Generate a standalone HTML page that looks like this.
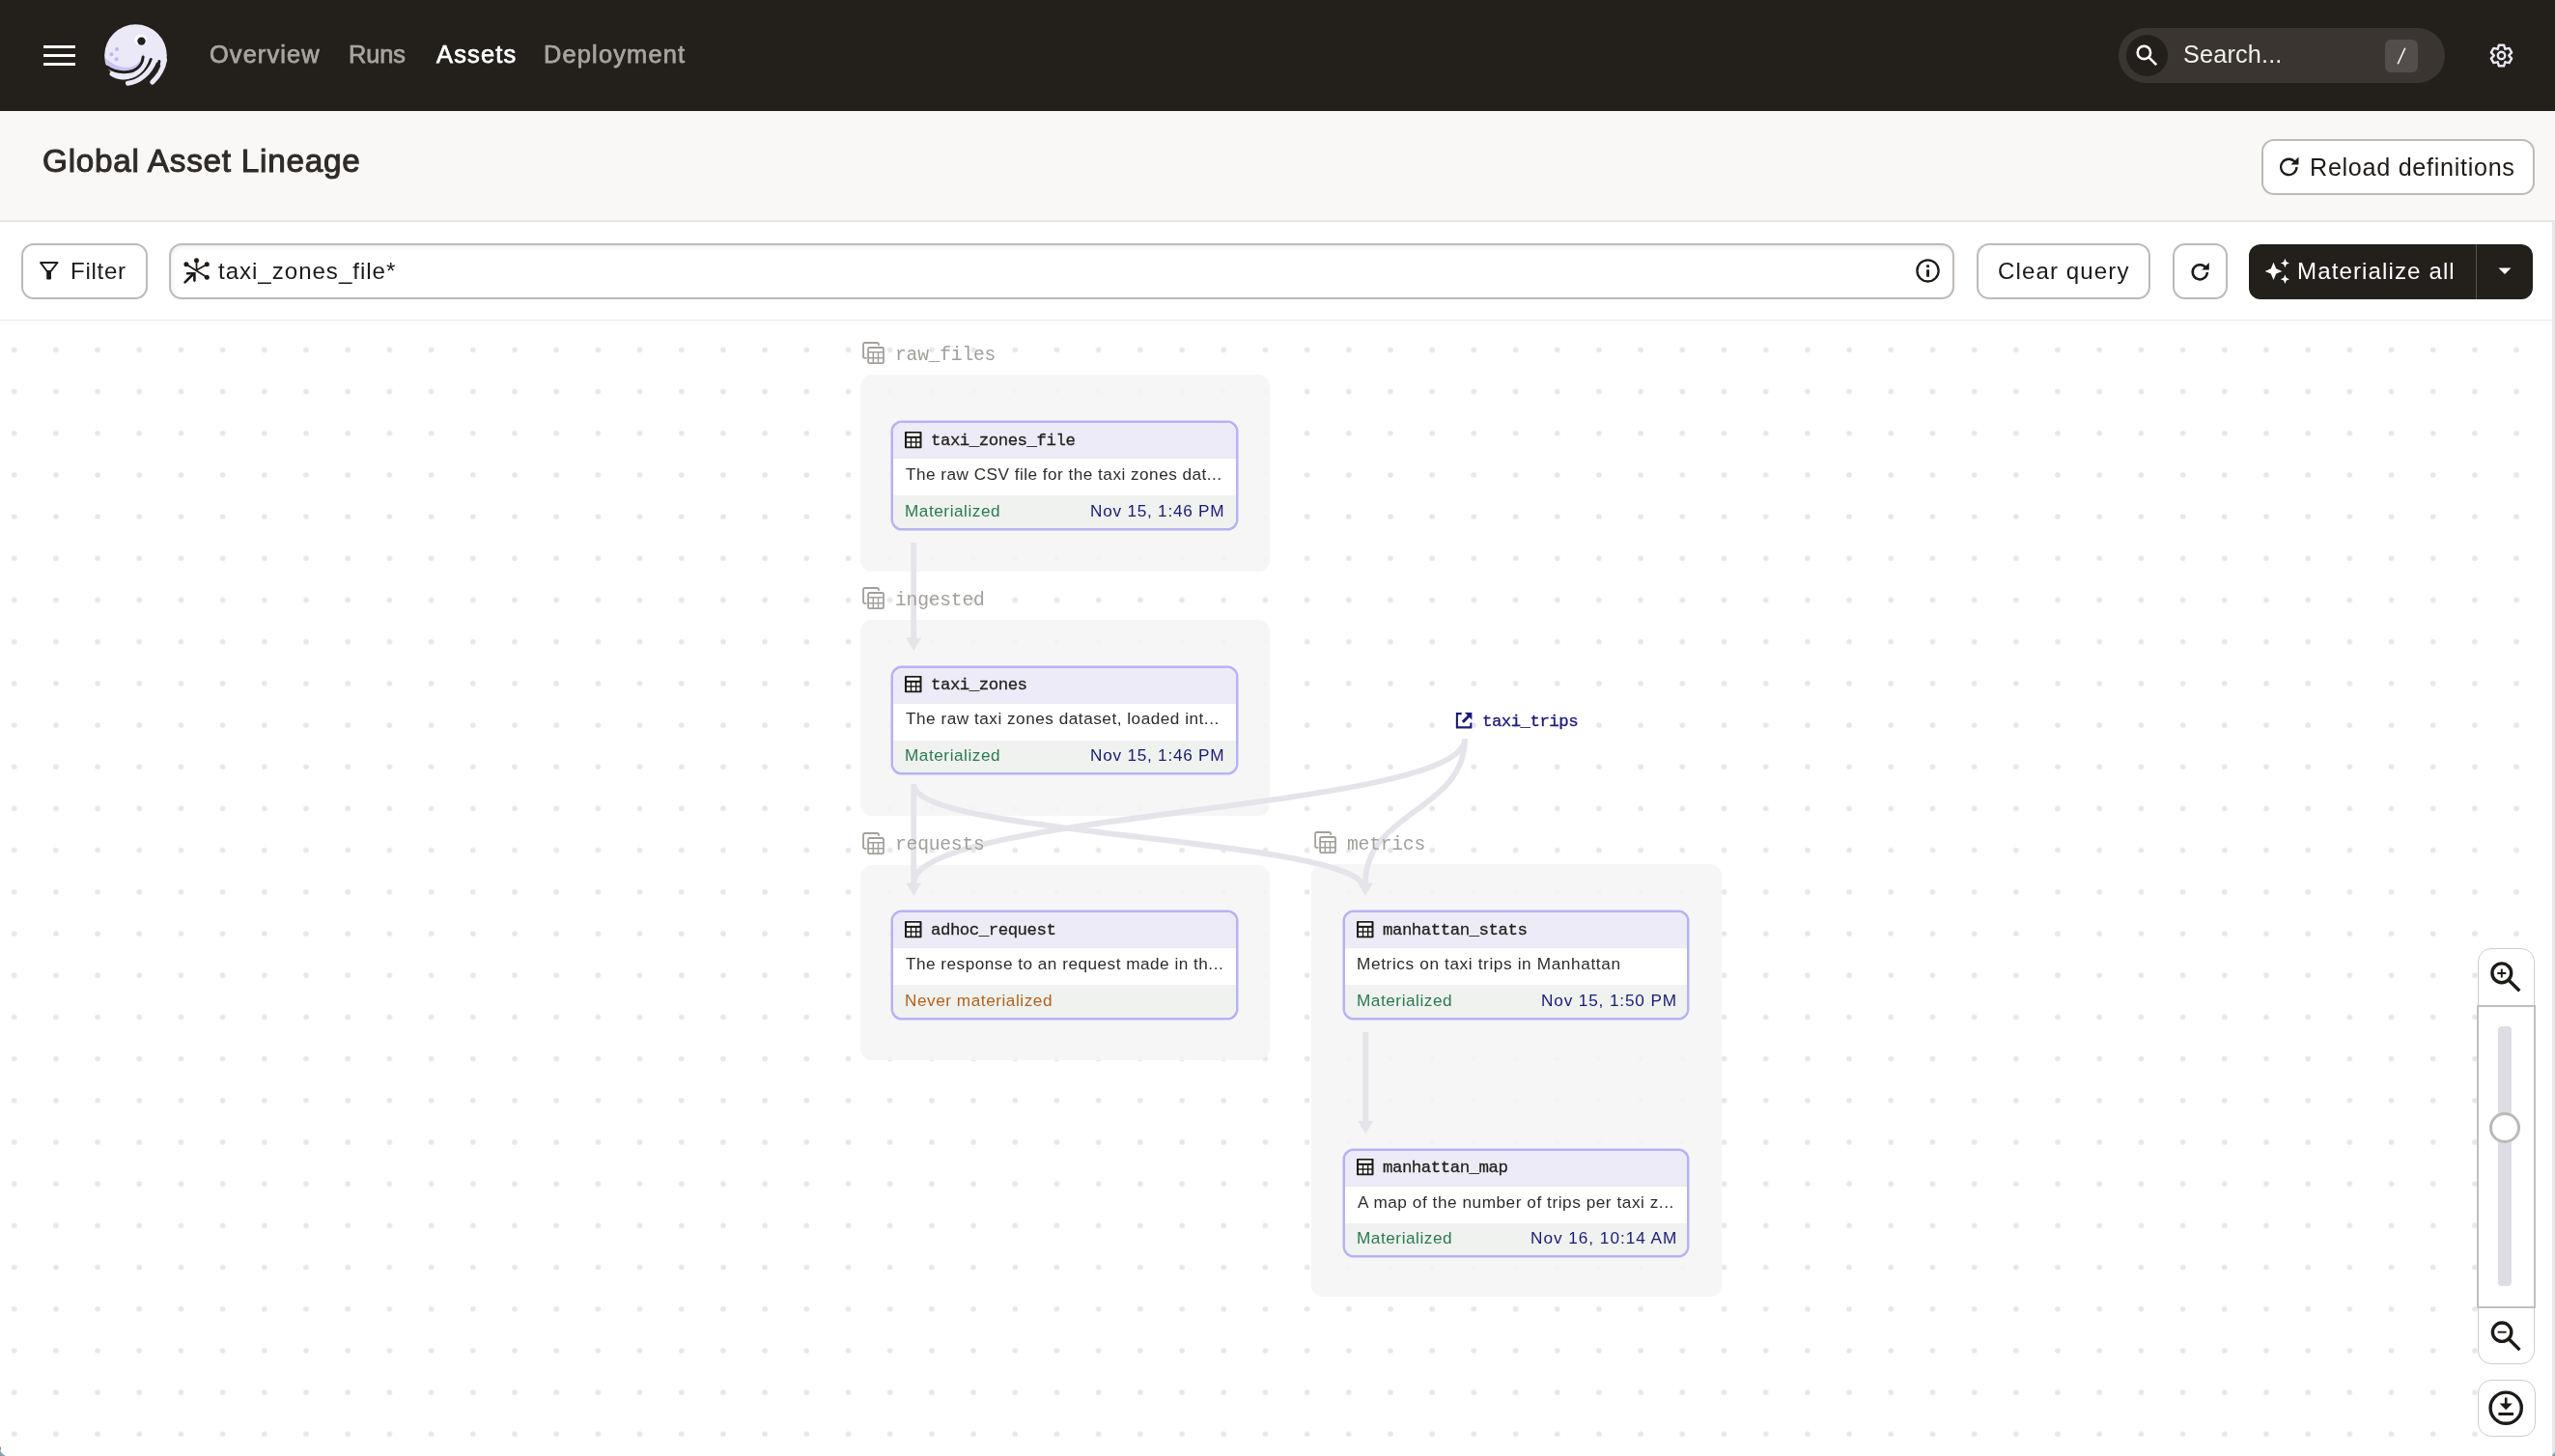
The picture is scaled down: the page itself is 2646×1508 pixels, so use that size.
<!DOCTYPE html>
<html><head><meta charset="utf-8"><title>Global Asset Lineage</title>
<style>
html,body{margin:0;padding:0;width:2646px;height:1508px;overflow:hidden;background:#fff;position:relative;font-family:"Liberation Sans",sans-serif}
.t{position:absolute;white-space:nowrap;will-change:transform}
.btn{position:absolute;box-sizing:border-box;border:2px solid #bdbab7;border-radius:13px;background:#fff}
.inp{box-shadow:inset 1px 2px 4px rgba(0,0,0,0.07)}
.node{position:absolute;width:358.3px;height:112.6px;box-sizing:border-box;border:2.4px solid #b7b2f3;border-radius:11px;overflow:hidden;background:#fff;box-shadow:0 0 0 0.5px #b7b2f3}
.nh{position:absolute;left:0;top:0;right:0;height:36px;background:#ecebf7;border-bottom:1.5px solid #e9ece9}
.nd{position:absolute;left:0;top:37.5px;right:0;height:37.5px;background:#fff}
.ns{position:absolute;left:0;top:75px;right:0;bottom:0;background:#eff2ef}
</style></head><body>
<div style="position:absolute;left:0;top:0;width:2646px;height:115px;background:#231f1b"></div><div style="position:absolute;left:45px;top:46.7px;width:33px;height:3.5px;background:#fff"></div><div style="position:absolute;left:45px;top:55.9px;width:33px;height:3.5px;background:#fff"></div><div style="position:absolute;left:45px;top:64.9px;width:33px;height:3.5px;background:#fff"></div><svg style="position:absolute;left:100px;top:18px" width="80" height="80" viewBox="0 0 80 80">
<defs><mask id="hm"><rect width="80" height="80" fill="#fff"/>
<path d="M0 50 L9 50 C14 57 20 61.5 27 62.5 C36 63.5 44 61.5 50 56.5 C54 52.5 56 49 57.5 45 L62 46 L66 50 L80 50 L80 80 L0 80 Z" fill="#000"/></mask>
<clipPath id="hc"><circle cx="40.5" cy="39.5" r="32.3"/></clipPath></defs>
<g mask="url(#hm)"><circle cx="40.5" cy="39.5" r="32.3" fill="#ebe9f8"/></g>
<path d="M9.5 47 C19 57.5 37 59.5 44.5 50.5 C47 47.5 48 44.5 48.2 41 L49.5 35 C47 43 44 47 40 49.5 C32 54 20 52 8.5 42 Z" fill="#c9c3f6" clip-path="url(#hc)"/>
<path d="M10.5 51 C20 58 37 59.5 44.5 50.5 C47 47.5 48 44.5 48.2 41" stroke="#231f1b" stroke-width="3" fill="none" stroke-linecap="round"/>
<path d="M16.1 58.5 C28 67 51 60 52.8 40" stroke="#ebe9f8" stroke-width="5.1" fill="none" stroke-linecap="round"/>
<path d="M33 65.5 C42 64 52 57.5 56.3 43.5" stroke="#231f1b" stroke-width="3" fill="none" stroke-linecap="round"/>
<path d="M32.5 68.3 C44 67 55 58 60.5 44" stroke="#ebe9f8" stroke-width="5.1" fill="none" stroke-linecap="round"/>
<path d="M55.5 65.5 C60 61 64 54 64.9 45.6" stroke="#231f1b" stroke-width="3" fill="none" stroke-linecap="round"/>
<path d="M57.8 67 C63 62 68.5 56 70.5 44" stroke="#ebe9f8" stroke-width="5.1" fill="none" stroke-linecap="round"/>
<ellipse cx="45.8" cy="23.2" rx="6.3" ry="5.8" fill="#fff"/>
<circle cx="46.5" cy="24.6" r="4.2" fill="#231f1b"/>
<circle cx="21" cy="33" r="2" fill="#bdb6f3"/><circle cx="15.5" cy="38.3" r="2" fill="#bdb6f3"/><circle cx="20.6" cy="43.3" r="2" fill="#bdb6f3"/>
</svg><div class="t" style="left:217.00px;top:44.49px;font-size:25.4px;line-height:25.4px;color:#a8a4a0;font-weight:400;font-family:'Liberation Sans', sans-serif;letter-spacing:1.1px;-webkit-text-stroke:0.75px #a8a4a0;">Overview</div>
<div class="t" style="left:361.10px;top:44.49px;font-size:25.4px;line-height:25.4px;color:#a8a4a0;font-weight:400;font-family:'Liberation Sans', sans-serif;letter-spacing:-0.13px;-webkit-text-stroke:0.75px #a8a4a0;">Runs</div>
<div class="t" style="left:452.00px;top:44.49px;font-size:25.4px;line-height:25.4px;color:#ffffff;font-weight:400;font-family:'Liberation Sans', sans-serif;letter-spacing:1.2px;-webkit-text-stroke:0.75px #fff;">Assets</div>
<div class="t" style="left:562.80px;top:44.49px;font-size:25.4px;line-height:25.4px;color:#a8a4a0;font-weight:400;font-family:'Liberation Sans', sans-serif;letter-spacing:1.18px;-webkit-text-stroke:0.75px #a8a4a0;">Deployment</div>
<div style="position:absolute;left:2194px;top:29px;width:338px;height:57px;border-radius:28.5px;background:#3a3531"></div><div style="position:absolute;left:2202px;top:36px;width:43px;height:43px;border-radius:50%;background:#231f1b"></div><svg style="position:absolute;left:2200px;top:35px" width="44" height="44" viewBox="2200 35 44 44">
<circle cx="2220.4" cy="54.4" r="6.7" stroke="#fff" stroke-width="2.6" fill="none"/>
<line x1="2225.6" y1="59.6" x2="2233.2" y2="67.2" stroke="#fff" stroke-width="2.6"/></svg><div class="t" style="left:2260.50px;top:43.86px;font-size:25.2px;line-height:25.2px;color:#f2f0ee;font-weight:400;font-family:'Liberation Sans', sans-serif;letter-spacing:0.19px;">Search...</div>
<div style="position:absolute;left:2470px;top:41px;width:34px;height:34px;border-radius:6px;background:#534e4b"></div><svg style="position:absolute;left:2470px;top:41px" width="34" height="34"><line x1="20.8" y1="8.7" x2="13.2" y2="25.2" stroke="#fff" stroke-width="1.5"/></svg><svg style="position:absolute;left:2570px;top:37px" width="40" height="40" viewBox="2570 37 40 40">
<path d="M2586.90 50.13 L2587.90 46.71 L2593.10 46.71 L2594.10 50.13 L2594.30 50.92 L2595.08 50.70 L2598.55 49.85 L2601.15 54.36 L2598.68 56.93 L2598.10 57.50 L2598.68 58.07 L2601.15 60.64 L2598.55 65.15 L2595.08 64.30 L2594.30 64.08 L2594.10 64.87 L2593.10 68.29 L2587.90 68.29 L2586.90 64.87 L2586.70 64.08 L2585.92 64.30 L2582.45 65.15 L2579.85 60.64 L2582.32 58.07 L2582.90 57.50 L2582.32 56.93 L2579.85 54.36 L2582.45 49.85 L2585.92 50.70 L2586.70 50.92Z" stroke="#e9e7f2" stroke-width="2.4" fill="none" stroke-linejoin="round"/>
<circle cx="2590.5" cy="57.5" r="3.7" stroke="#e9e7f2" stroke-width="2.4" fill="none"/></svg><div style="position:absolute;left:0;top:115px;width:2646px;height:113px;background:#f9f8f6"></div><div style="position:absolute;left:0;top:228px;width:2646px;height:2px;background:#e7e6e4"></div><div class="t" style="left:44.20px;top:149.50px;font-size:33.3px;line-height:33.3px;color:#2f2b28;font-weight:400;font-family:'Liberation Sans', sans-serif;letter-spacing:0.74px;-webkit-text-stroke:1px #2f2b28;">Global Asset Lineage</div>
<div class="btn" style="left:2342.2px;top:144.2px;width:283.3px;height:57.5px"></div><svg style="position:absolute;left:2358px;top:159.6px" width="26" height="24" viewBox="0 0 26 24">
<path d="M19.2 8.5 A8.2 8.2 0 1 0 20.5 13" stroke="#1d1a17" stroke-width="2.3" fill="none"/>
<path d="M22.5 2.5 L22.5 10.5 L14.5 10.5 Z" fill="#1d1a17"/></svg><div class="t" style="left:2392.00px;top:161.06px;font-size:25.2px;line-height:25.2px;color:#1d1a17;font-weight:400;font-family:'Liberation Sans', sans-serif;letter-spacing:0.69px;">Reload definitions</div>
<div style="position:absolute;left:0;top:230px;width:2643px;height:101px;background:#fff"></div><div style="position:absolute;left:0;top:330.5px;width:2643px;height:1.5px;background:#e8e7e5"></div><div style="position:absolute;left:2643px;top:230px;width:3px;height:1278px;background:#e8e8e8"></div><div class="btn" style="left:22px;top:252px;width:130.5px;height:57.5px"></div><svg style="position:absolute;left:38px;top:268px" width="26" height="26" viewBox="38 268 26 26">
<path d="M42 272 L59.5 272 L52.5 281 L48.8 281 Z" stroke="#1d1a17" stroke-width="2" fill="none" stroke-linejoin="round"/>
<rect x="48.2" y="280" width="4.8" height="9.6" rx="1" fill="#1d1a17"/></svg><div class="t" style="left:73.40px;top:269.29px;font-size:24.1px;line-height:24.1px;color:#1d1a17;font-weight:400;font-family:'Liberation Sans', sans-serif;letter-spacing:0.71px;">Filter</div>
<div class="btn inp" style="left:175.2px;top:252px;width:1849px;height:57.5px"></div><svg style="position:absolute;left:186px;top:264px" width="34" height="34" viewBox="186 264 34 34">
<g stroke="#1d1a17" stroke-width="1.8" fill="none">
<line x1="203.6" y1="279.8" x2="203.5" y2="269.8"/><line x1="192.9" y1="273.8" x2="214.3" y2="287.3"/>
<line x1="203.6" y1="279.8" x2="214.3" y2="273.8"/></g>
<g fill="#1d1a17"><circle cx="203.5" cy="269.8" r="2.5"/><circle cx="192.9" cy="273.8" r="2.5"/><circle cx="214.3" cy="273.8" r="2.5"/><circle cx="214.3" cy="287.3" r="2.5"/></g>
<line x1="191.6" y1="292.4" x2="200.2" y2="283.8" stroke="#1d1a17" stroke-width="2.7" stroke-linecap="round"/>
<path d="M194 283.2 L201.4 283.2 L201.4 290.6" stroke="#1d1a17" stroke-width="2.6" fill="none" stroke-linecap="round"/></svg><div class="t" style="left:226.00px;top:269.29px;font-size:24.1px;line-height:24.1px;color:#1d1a17;font-weight:400;font-family:'Liberation Sans', sans-serif;letter-spacing:0.97px;">taxi_zones_file*</div>
<svg style="position:absolute;left:1982px;top:268px" width="28" height="26" viewBox="1982 268 28 26">
<circle cx="1996.5" cy="280.4" r="11.1" stroke="#1d1a17" stroke-width="2.3" fill="none"/>
<rect x="1995.1" y="279.2" width="2.9" height="7.6" rx="0.5" fill="#1d1a17"/><rect x="1995.1" y="274.2" width="2.9" height="2.9" rx="0.6" fill="#1d1a17"/></svg><div class="btn" style="left:2047.3px;top:252px;width:180px;height:57.5px"></div><div class="t" style="left:2069.00px;top:269.29px;font-size:24.1px;line-height:24.1px;color:#1d1a17;font-weight:400;font-family:'Liberation Sans', sans-serif;letter-spacing:1.1px;">Clear query</div>
<div class="btn" style="left:2250.3px;top:252px;width:57.2px;height:57.5px"></div><svg style="position:absolute;left:2266px;top:268px" width="26" height="26" viewBox="0 0 26 24">
<path d="M18.6 8.5 A7.6 7.6 0 1 0 19.9 13" stroke="#1d1a17" stroke-width="2.5" fill="none"/>
<path d="M21.8 3 L21.8 10.6 L14.2 10.6 Z" fill="#1d1a17"/></svg><div style="position:absolute;left:2328.5px;top:252.5px;width:294px;height:57px;border-radius:12px;background:#231f1b"></div><div style="position:absolute;left:2563.7px;top:252.5px;width:1px;height:57px;background:#57524e"></div><svg style="position:absolute;left:2340px;top:264px" width="34" height="34" viewBox="2340 264 34 34">
<path fill="#fff" d="M2354.50 271.70 L2357.20 278.20 L2363.40 280.90 L2357.20 283.60 L2354.50 290.10 L2351.80 283.60 L2345.60 280.90 L2351.80 278.20Z"/>
<path fill="#fff" d="M2366.40 267.80 L2367.75 271.15 L2371.00 272.50 L2367.75 273.85 L2366.40 277.20 L2365.05 273.85 L2361.80 272.50 L2365.05 271.15Z"/>
<path fill="#fff" d="M2366.40 284.50 L2367.75 287.85 L2371.00 289.20 L2367.75 290.55 L2366.40 293.90 L2365.05 290.55 L2361.80 289.20 L2365.05 287.85Z"/>
</svg><div class="t" style="left:2379.30px;top:269.29px;font-size:24.1px;line-height:24.1px;color:#ffffff;font-weight:400;font-family:'Liberation Sans', sans-serif;letter-spacing:1.1px;">Materialize all</div>
<svg style="position:absolute;left:2584px;top:274px" width="20" height="14"><path d="M3.5 3.5 L16.5 3.5 L10 10 Z" fill="#fff"/></svg><svg style="position:absolute;left:0;top:332px" width="2643" height="1176" viewBox="0 332 2643 1176">
<defs><pattern id="dots" x="-6.895" y="340.70500000000004" width="43.19" height="43.19" patternUnits="userSpaceOnUse">
<circle cx="21.595" cy="21.595" r="2.8" fill="#e7e7e7"/></pattern></defs>
<rect x="0" y="332" width="2643" height="1176" fill="url(#dots)"/></svg><div style="position:absolute;left:890.5px;top:388.3px;width:424.5px;height:203.4px;border-radius:12px;background:rgba(245,245,245,0.88)"></div><div style="position:absolute;left:890.5px;top:642.2px;width:424.5px;height:202.4px;border-radius:12px;background:rgba(245,245,245,0.88)"></div><div style="position:absolute;left:890.5px;top:895.5px;width:424.5px;height:202px;border-radius:12px;background:rgba(245,245,245,0.88)"></div><div style="position:absolute;left:1358.3px;top:895px;width:424.5px;height:448.3px;border-radius:12px;background:rgba(245,245,245,0.88)"></div><svg style="position:absolute;left:0;top:332px" width="2643" height="1176" viewBox="0 332 2643 1176"><path d="M946.2 562 C946.2 612.0 946.2 612.0 946.2 662" stroke="#e5e4ea" stroke-width="5.8" fill="none"/><path d="M946.2 816 C946.2 866.0 946.2 866.0 946.2 916" stroke="#e5e4ea" stroke-width="5.8" fill="none"/><path d="M946.2 812 C946.2 867.0 1414 867.0 1414 922" stroke="#e5e4ea" stroke-width="5.8" fill="none"/><path d="M1517 765 C1517 840.0 946.2 840.0 946.2 915" stroke="#e5e4ea" stroke-width="5.8" fill="none"/><path d="M1517 765 C1517 840.0 1414 840.0 1414 915" stroke="#e5e4ea" stroke-width="5.8" fill="none"/><path d="M1414.2 1069 C1414.2 1115.5 1414.2 1115.5 1414.2 1162" stroke="#e5e4ea" stroke-width="5.8" fill="none"/><path d="M938.2 660.5 L954.2 660.5 L946.2 674Z" fill="#e5e4ea"/><path d="M938.2 914.5 L954.2 914.5 L946.2 928Z" fill="#e5e4ea"/><path d="M1406 914.5 L1422 914.5 L1414 928Z" fill="#e5e4ea"/><path d="M1406.2 1161.0 L1422.2 1161.0 L1414.2 1174.5Z" fill="#e5e4ea"/></svg><svg style="position:absolute;left:893.0px;top:354.3px" width="24" height="24" viewBox="0 0 24 24">
<path d="M17 3.2 V2.6 Q17 1 15.4 1 H2.7 Q1.1 1 1.1 2.6 V15.3 Q1.1 16.9 2.7 16.9 H3.8" stroke="#a39f9b" stroke-width="1.8" fill="none" stroke-linecap="round"/>
<rect x="6.1" y="6.0" width="15.9" height="16.2" rx="1.6" stroke="#a39f9b" stroke-width="1.8" fill="none"/>
<path d="M6.1 10.8 H22 M6.1 16.7 H22 M11.3 10.8 V22.2 M16.5 10.8 V22.2" stroke="#a39f9b" stroke-width="1.5"/></svg><div class="t" style="left:927.30px;top:359.11px;font-size:19.7px;line-height:19.7px;color:#a39f9b;font-weight:400;font-family:'Liberation Mono', monospace;letter-spacing:-0.24px;">raw_files</div>
<svg style="position:absolute;left:893.0px;top:608.2px" width="24" height="24" viewBox="0 0 24 24">
<path d="M17 3.2 V2.6 Q17 1 15.4 1 H2.7 Q1.1 1 1.1 2.6 V15.3 Q1.1 16.9 2.7 16.9 H3.8" stroke="#a39f9b" stroke-width="1.8" fill="none" stroke-linecap="round"/>
<rect x="6.1" y="6.0" width="15.9" height="16.2" rx="1.6" stroke="#a39f9b" stroke-width="1.8" fill="none"/>
<path d="M6.1 10.8 H22 M6.1 16.7 H22 M11.3 10.8 V22.2 M16.5 10.8 V22.2" stroke="#a39f9b" stroke-width="1.5"/></svg><div class="t" style="left:927.30px;top:613.01px;font-size:19.7px;line-height:19.7px;color:#a39f9b;font-weight:400;font-family:'Liberation Mono', monospace;letter-spacing:-0.24px;">ingested</div>
<svg style="position:absolute;left:893.0px;top:861.5px" width="24" height="24" viewBox="0 0 24 24">
<path d="M17 3.2 V2.6 Q17 1 15.4 1 H2.7 Q1.1 1 1.1 2.6 V15.3 Q1.1 16.9 2.7 16.9 H3.8" stroke="#a39f9b" stroke-width="1.8" fill="none" stroke-linecap="round"/>
<rect x="6.1" y="6.0" width="15.9" height="16.2" rx="1.6" stroke="#a39f9b" stroke-width="1.8" fill="none"/>
<path d="M6.1 10.8 H22 M6.1 16.7 H22 M11.3 10.8 V22.2 M16.5 10.8 V22.2" stroke="#a39f9b" stroke-width="1.5"/></svg><div class="t" style="left:927.30px;top:866.31px;font-size:19.7px;line-height:19.7px;color:#a39f9b;font-weight:400;font-family:'Liberation Mono', monospace;letter-spacing:-0.24px;">requests</div>
<svg style="position:absolute;left:1360.8px;top:861px" width="24" height="24" viewBox="0 0 24 24">
<path d="M17 3.2 V2.6 Q17 1 15.4 1 H2.7 Q1.1 1 1.1 2.6 V15.3 Q1.1 16.9 2.7 16.9 H3.8" stroke="#a39f9b" stroke-width="1.8" fill="none" stroke-linecap="round"/>
<rect x="6.1" y="6.0" width="15.9" height="16.2" rx="1.6" stroke="#a39f9b" stroke-width="1.8" fill="none"/>
<path d="M6.1 10.8 H22 M6.1 16.7 H22 M11.3 10.8 V22.2 M16.5 10.8 V22.2" stroke="#a39f9b" stroke-width="1.5"/></svg><div class="t" style="left:1395.10px;top:865.81px;font-size:19.7px;line-height:19.7px;color:#a39f9b;font-weight:400;font-family:'Liberation Mono', monospace;letter-spacing:-0.24px;">metrics</div>
<div class="node" style="left:923.3px;top:436.3px">
<div class="nh"></div><div class="nd"></div><div class="ns"></div></div><svg style="position:absolute;left:937.3px;top:447.0px" width="18" height="18" viewBox="0 0 18 18">
<rect x="0" y="0" width="17.5" height="17.2" rx="0.8" fill="#1d1a17"/>
<g fill="#fff"><rect x="2.06" y="1.7" width="13.4" height="3.1"/>
<rect x="2.06" y="6.9" width="3.74" height="3.4"/><rect x="7.2" y="6.9" width="3.8" height="3.4"/><rect x="12.4" y="6.9" width="3.05" height="3.4"/>
<rect x="2.06" y="11.7" width="3.74" height="3.75"/><rect x="7.2" y="11.7" width="3.8" height="3.75"/><rect x="12.4" y="11.7" width="3.05" height="3.75"/></g></svg><div class="t" style="left:963.80px;top:447.97px;font-size:17.4px;line-height:17.4px;color:#231f1b;font-weight:400;font-family:'Liberation Mono', monospace;letter-spacing:-0.48px;-webkit-text-stroke:0.3px #231f1b;">taxi_zones_file</div>
<div class="t" style="left:938.30px;top:483.24px;font-size:17.2px;line-height:17.2px;color:#2f2b28;font-weight:400;font-family:'Liberation Sans', sans-serif;letter-spacing:0.475px;">The raw CSV file for the taxi zones dat...</div>
<div class="t" style="left:937.30px;top:520.94px;font-size:17.2px;line-height:17.2px;color:#2b7a4f;font-weight:400;font-family:'Liberation Sans', sans-serif;letter-spacing:0.54px;">Materialized</div>
<div class="t" style="right:1377.70px;top:520.94px;font-size:17.2px;line-height:17.2px;color:#1b1a78;letter-spacing:0.76px">Nov 15, 1:46 PM</div><div class="node" style="left:923.3px;top:689.5px">
<div class="nh"></div><div class="nd"></div><div class="ns"></div></div><svg style="position:absolute;left:937.3px;top:700.2px" width="18" height="18" viewBox="0 0 18 18">
<rect x="0" y="0" width="17.5" height="17.2" rx="0.8" fill="#1d1a17"/>
<g fill="#fff"><rect x="2.06" y="1.7" width="13.4" height="3.1"/>
<rect x="2.06" y="6.9" width="3.74" height="3.4"/><rect x="7.2" y="6.9" width="3.8" height="3.4"/><rect x="12.4" y="6.9" width="3.05" height="3.4"/>
<rect x="2.06" y="11.7" width="3.74" height="3.75"/><rect x="7.2" y="11.7" width="3.8" height="3.75"/><rect x="12.4" y="11.7" width="3.05" height="3.75"/></g></svg><div class="t" style="left:963.80px;top:701.17px;font-size:17.4px;line-height:17.4px;color:#231f1b;font-weight:400;font-family:'Liberation Mono', monospace;letter-spacing:-0.48px;-webkit-text-stroke:0.3px #231f1b;">taxi_zones</div>
<div class="t" style="left:938.30px;top:736.44px;font-size:17.2px;line-height:17.2px;color:#2f2b28;font-weight:400;font-family:'Liberation Sans', sans-serif;letter-spacing:0.51px;">The raw taxi zones dataset, loaded int...</div>
<div class="t" style="left:937.30px;top:774.14px;font-size:17.2px;line-height:17.2px;color:#2b7a4f;font-weight:400;font-family:'Liberation Sans', sans-serif;letter-spacing:0.54px;">Materialized</div>
<div class="t" style="right:1377.70px;top:774.14px;font-size:17.2px;line-height:17.2px;color:#1b1a78;letter-spacing:0.76px">Nov 15, 1:46 PM</div><div class="node" style="left:923.3px;top:943px">
<div class="nh"></div><div class="nd"></div><div class="ns"></div></div><svg style="position:absolute;left:937.3px;top:953.7px" width="18" height="18" viewBox="0 0 18 18">
<rect x="0" y="0" width="17.5" height="17.2" rx="0.8" fill="#1d1a17"/>
<g fill="#fff"><rect x="2.06" y="1.7" width="13.4" height="3.1"/>
<rect x="2.06" y="6.9" width="3.74" height="3.4"/><rect x="7.2" y="6.9" width="3.8" height="3.4"/><rect x="12.4" y="6.9" width="3.05" height="3.4"/>
<rect x="2.06" y="11.7" width="3.74" height="3.75"/><rect x="7.2" y="11.7" width="3.8" height="3.75"/><rect x="12.4" y="11.7" width="3.05" height="3.75"/></g></svg><div class="t" style="left:963.80px;top:954.67px;font-size:17.4px;line-height:17.4px;color:#231f1b;font-weight:400;font-family:'Liberation Mono', monospace;letter-spacing:-0.48px;-webkit-text-stroke:0.3px #231f1b;">adhoc_request</div>
<div class="t" style="left:938.30px;top:989.94px;font-size:17.2px;line-height:17.2px;color:#2f2b28;font-weight:400;font-family:'Liberation Sans', sans-serif;letter-spacing:0.49px;">The response to an request made in th...</div>
<div class="t" style="left:937.30px;top:1027.64px;font-size:17.2px;line-height:17.2px;color:#b0621e;font-weight:400;font-family:'Liberation Sans', sans-serif;letter-spacing:0.54px;">Never materialized</div>
<div class="node" style="left:1391.1px;top:943.2px">
<div class="nh"></div><div class="nd"></div><div class="ns"></div></div><svg style="position:absolute;left:1405.1px;top:953.9000000000001px" width="18" height="18" viewBox="0 0 18 18">
<rect x="0" y="0" width="17.5" height="17.2" rx="0.8" fill="#1d1a17"/>
<g fill="#fff"><rect x="2.06" y="1.7" width="13.4" height="3.1"/>
<rect x="2.06" y="6.9" width="3.74" height="3.4"/><rect x="7.2" y="6.9" width="3.8" height="3.4"/><rect x="12.4" y="6.9" width="3.05" height="3.4"/>
<rect x="2.06" y="11.7" width="3.74" height="3.75"/><rect x="7.2" y="11.7" width="3.8" height="3.75"/><rect x="12.4" y="11.7" width="3.05" height="3.75"/></g></svg><div class="t" style="left:1431.60px;top:954.87px;font-size:17.4px;line-height:17.4px;color:#231f1b;font-weight:400;font-family:'Liberation Mono', monospace;letter-spacing:-0.48px;-webkit-text-stroke:0.3px #231f1b;">manhattan_stats</div>
<div class="t" style="left:1405.10px;top:990.14px;font-size:17.2px;line-height:17.2px;color:#2f2b28;font-weight:400;font-family:'Liberation Sans', sans-serif;letter-spacing:0.63px;">Metrics on taxi trips in Manhattan</div>
<div class="t" style="left:1405.10px;top:1027.84px;font-size:17.2px;line-height:17.2px;color:#2b7a4f;font-weight:400;font-family:'Liberation Sans', sans-serif;letter-spacing:0.54px;">Materialized</div>
<div class="t" style="right:909.20px;top:1027.84px;font-size:17.2px;line-height:17.2px;color:#1b1a78;letter-spacing:0.86px">Nov 15, 1:50 PM</div><div class="node" style="left:1391.1px;top:1189.6px">
<div class="nh"></div><div class="nd"></div><div class="ns"></div></div><svg style="position:absolute;left:1405.1px;top:1200.3px" width="18" height="18" viewBox="0 0 18 18">
<rect x="0" y="0" width="17.5" height="17.2" rx="0.8" fill="#1d1a17"/>
<g fill="#fff"><rect x="2.06" y="1.7" width="13.4" height="3.1"/>
<rect x="2.06" y="6.9" width="3.74" height="3.4"/><rect x="7.2" y="6.9" width="3.8" height="3.4"/><rect x="12.4" y="6.9" width="3.05" height="3.4"/>
<rect x="2.06" y="11.7" width="3.74" height="3.75"/><rect x="7.2" y="11.7" width="3.8" height="3.75"/><rect x="12.4" y="11.7" width="3.05" height="3.75"/></g></svg><div class="t" style="left:1431.60px;top:1201.27px;font-size:17.4px;line-height:17.4px;color:#231f1b;font-weight:400;font-family:'Liberation Mono', monospace;letter-spacing:-0.48px;-webkit-text-stroke:0.3px #231f1b;">manhattan_map</div>
<div class="t" style="left:1406.10px;top:1236.54px;font-size:17.2px;line-height:17.2px;color:#2f2b28;font-weight:400;font-family:'Liberation Sans', sans-serif;letter-spacing:0.55px;">A map of the number of trips per taxi z...</div>
<div class="t" style="left:1405.10px;top:1274.24px;font-size:17.2px;line-height:17.2px;color:#2b7a4f;font-weight:400;font-family:'Liberation Sans', sans-serif;letter-spacing:0.54px;">Materialized</div>
<div class="t" style="right:908.70px;top:1274.24px;font-size:17.2px;line-height:17.2px;color:#1b1a78;letter-spacing:0.98px">Nov 16, 10:14 AM</div><svg style="position:absolute;left:1505px;top:735px" width="22" height="22" viewBox="1505 735 22 22">
<path d="M1513.7 739.1 H1508.9 V753.4 H1523.3 V748.5" stroke="#1b1a78" stroke-width="2.1" fill="none"/>
<path d="M1514.9 747.9 L1521.5 741.3" stroke="#1b1a78" stroke-width="2.9"/><path d="M1516.9 738 H1524.4 V745.5Z" fill="#1b1a78"/></svg><div class="t" style="left:1534.80px;top:738.97px;font-size:17.4px;line-height:17.4px;color:#1b1a78;font-weight:400;font-family:'Liberation Mono', monospace;letter-spacing:-0.53px;-webkit-text-stroke:0.3px #1b1a78;">taxi_trips</div>
<div style="position:absolute;left:2566px;top:982px;width:59px;height:431px;background:#fff;border-radius:14px;border:1px solid #cfcdcb;box-sizing:border-box"></div>
<div style="position:absolute;left:2565.3px;top:1041px;width:60.5px;height:314px;border:2px solid #c2c0bd;box-sizing:border-box;background:#fff"></div>
<div style="position:absolute;left:2587px;top:1063.3px;width:14px;height:269px;border-radius:4px;background:#dedde6"></div>
<div style="position:absolute;left:2578.2px;top:1152.2px;width:31.6px;height:31.6px;border-radius:50%;background:#fff;border:3px solid #bcb9b7;box-sizing:border-box"></div>
<div style="position:absolute;left:2566px;top:1429px;width:59.6px;height:59px;background:#fff;border-radius:14px;border:1px solid #cfcdcb;box-sizing:border-box"></div><svg style="position:absolute;left:2566px;top:982px" width="60" height="60" viewBox="2566 982 60 60">
<circle cx="2590.8" cy="1007.8" r="9.9" stroke="#1d1a17" stroke-width="3.4" fill="none"/>
<line x1="2598.2" y1="1015.2" x2="2609.3" y2="1026.3" stroke="#1d1a17" stroke-width="3.4"/>
<path d="M2586.3 1008 H2595.3 M2590.8 1003.5 V1012.5" stroke="#1d1a17" stroke-width="1.9"/></svg><svg style="position:absolute;left:2566px;top:1355px" width="60" height="60" viewBox="2566 1355 60 60">
<circle cx="2591.1" cy="1379.7" r="9.7" stroke="#1d1a17" stroke-width="3.4" fill="none"/>
<line x1="2598.4" y1="1387" x2="2609.5" y2="1398.1" stroke="#1d1a17" stroke-width="3.4"/>
<path d="M2586.6 1379.7 H2595.6" stroke="#1d1a17" stroke-width="1.9"/></svg><svg style="position:absolute;left:2566px;top:1429px" width="60" height="60" viewBox="2566 1429 60 60">
<circle cx="2595.2" cy="1458.2" r="16.1" stroke="#1d1a17" stroke-width="3.4" fill="none"/>
<path d="M2595.2 1447.5 V1456" stroke="#1d1a17" stroke-width="2.6"/>
<path d="M2588.6 1453.6 L2601.8 1453.6 L2595.2 1460.2Z" fill="#1d1a17"/>
<rect x="2587.4" y="1463" width="15.6" height="3" fill="#1d1a17"/></svg><svg style="position:absolute;left:0;top:1498px" width="8" height="10" viewBox="0 1498 8 10"><path d="M0 1501.8 Q1.5 1506 5.6 1508 L0 1508Z" fill="#88a0ab"/><rect x="0" y="1498.6" width="1" height="3.2" fill="#8c8a88"/></svg><svg style="position:absolute;left:2640px;top:1502px" width="6" height="6" viewBox="2640 1502 6 6"><path d="M2646 1503.8 Q2644 1506 2642.8 1508 L2646 1508Z" fill="#88a0ab"/></svg>
</body></html>
